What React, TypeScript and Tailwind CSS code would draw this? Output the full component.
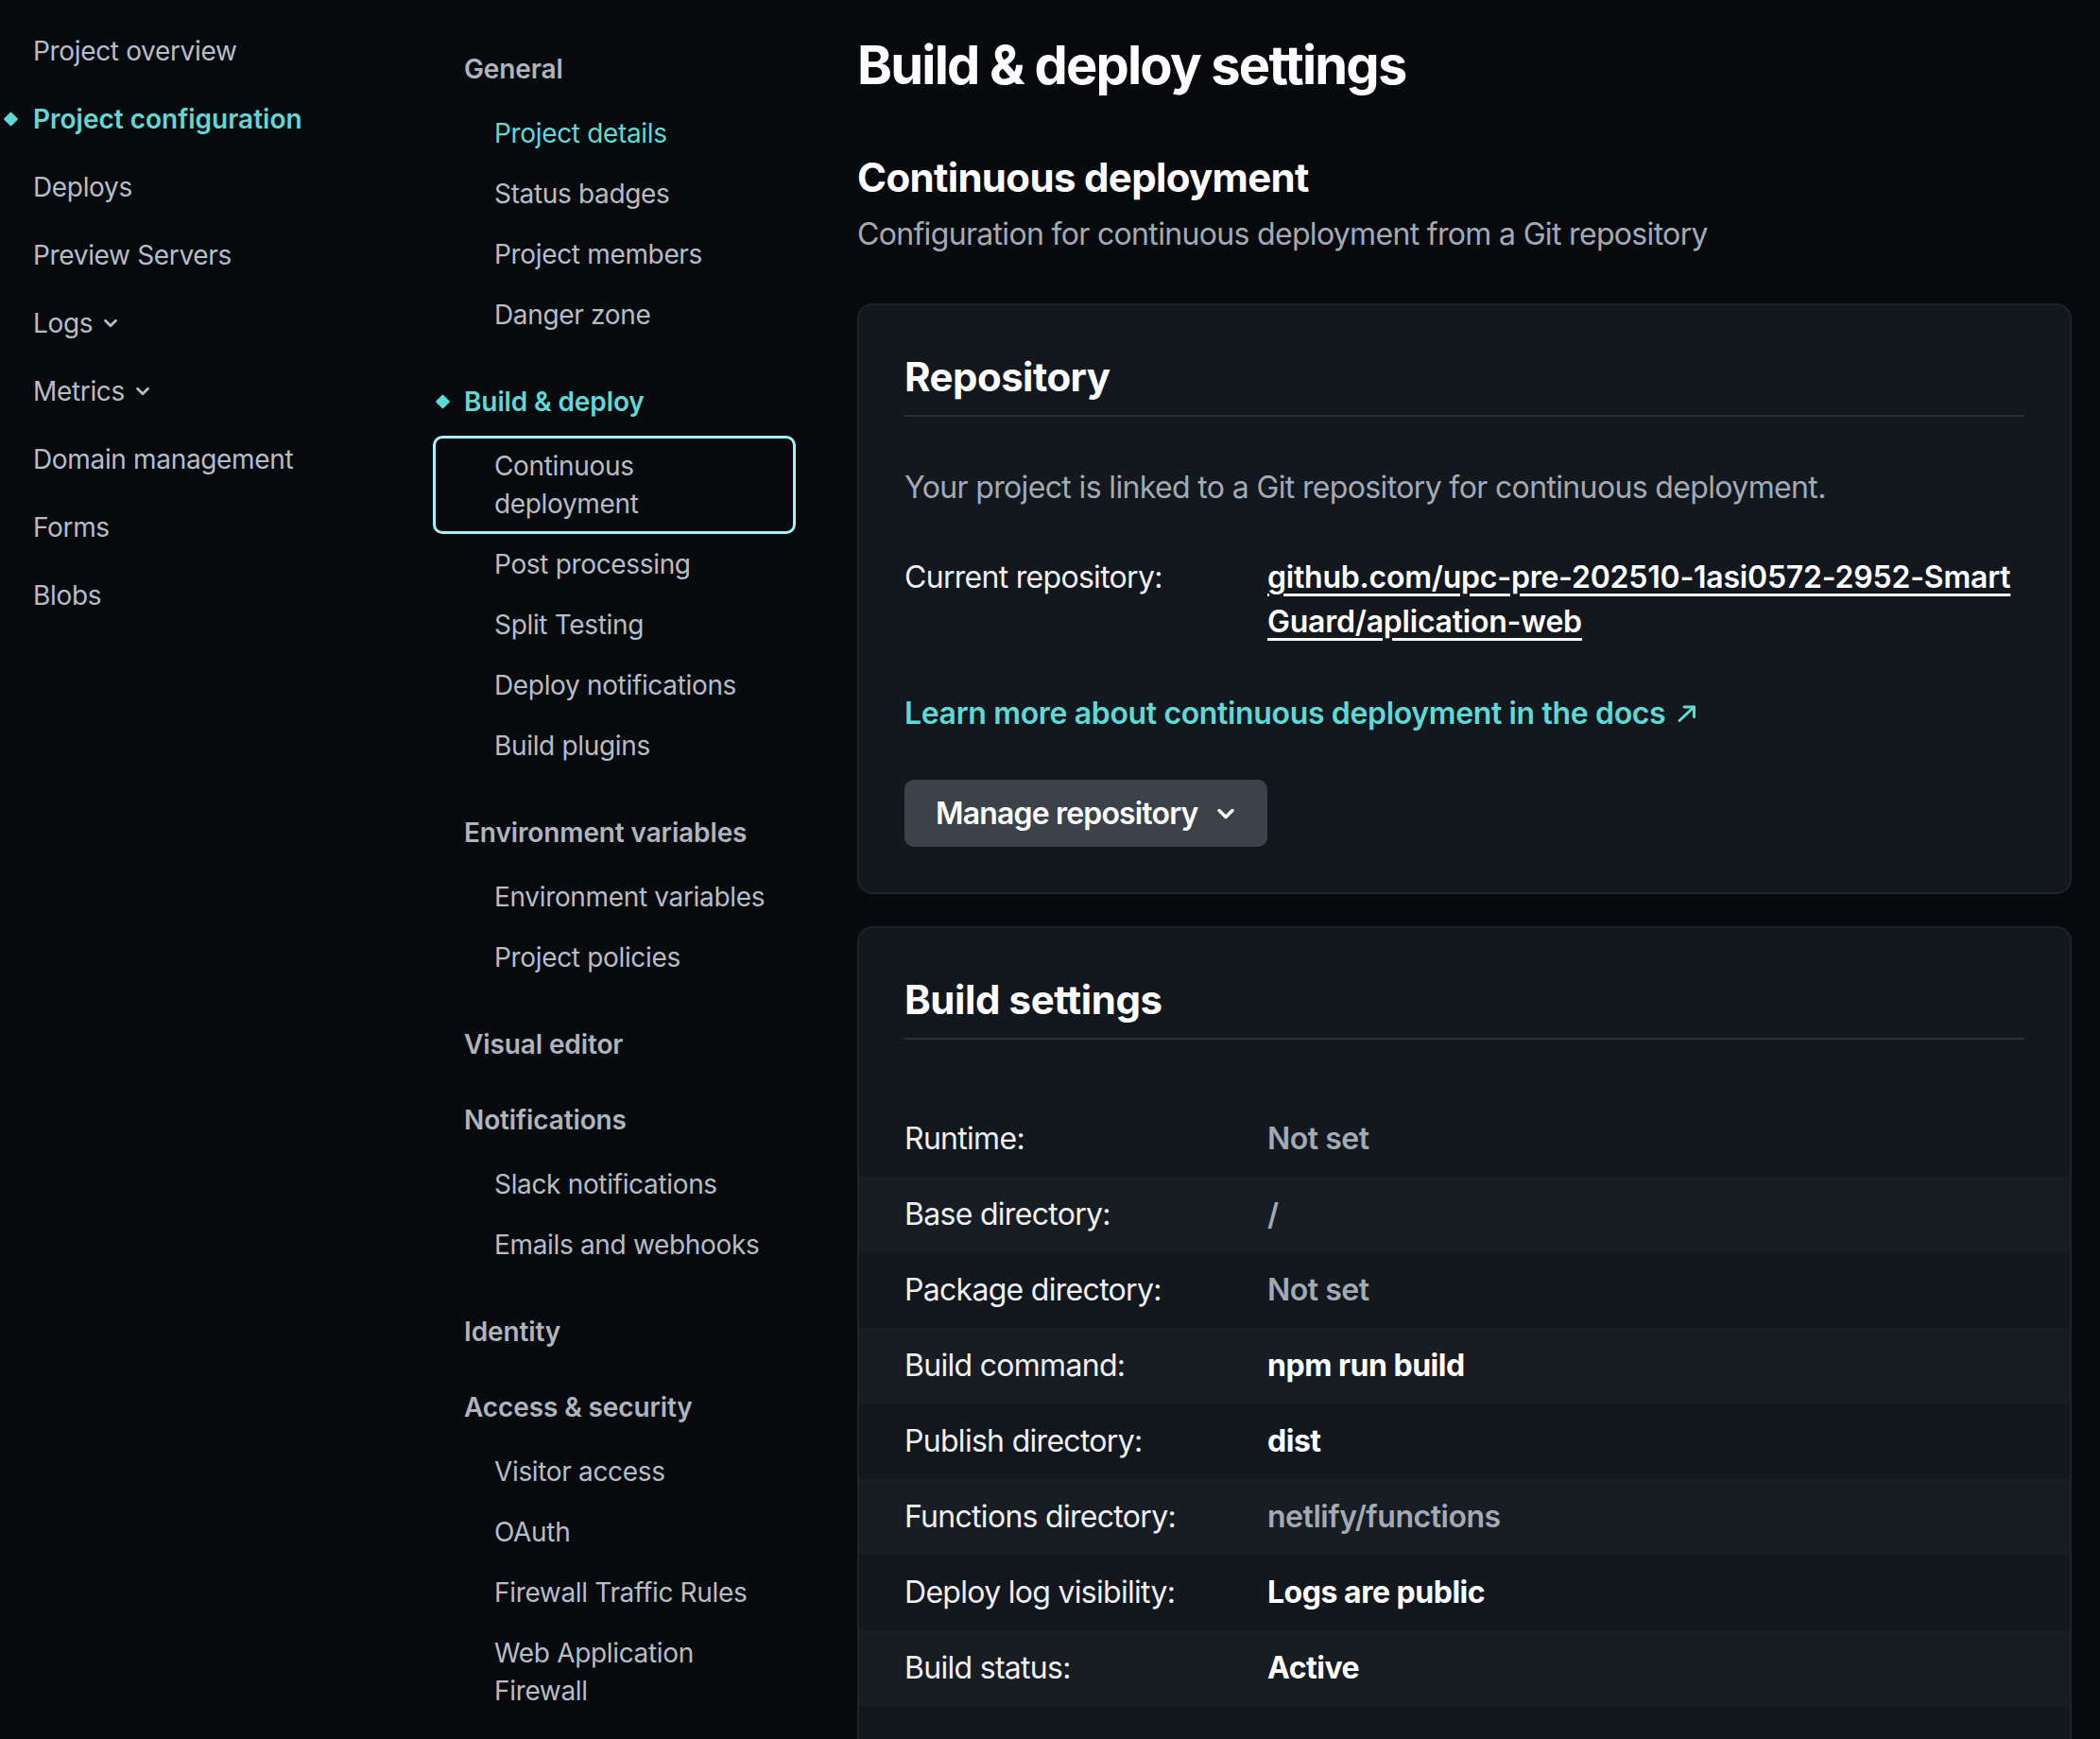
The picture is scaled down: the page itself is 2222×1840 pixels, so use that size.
import { ChevronDown } from 'lucide-react';

type LeftItem = { label: string; active?: boolean; chevron?: boolean };

const leftItems: LeftItem[] = [
  { label: 'Project overview' },
  { label: 'Project configuration', active: true },
  { label: 'Deploys' },
  { label: 'Preview Servers' },
  { label: 'Logs', chevron: true },
  { label: 'Metrics', chevron: true },
  { label: 'Domain management' },
  { label: 'Forms' },
  { label: 'Blobs' },
];

type SubItem = { lines: string[]; active?: boolean; focused?: boolean };
type Group = { title: string; active?: boolean; items: SubItem[] };

const groups: Group[] = [
  {
    title: 'General',
    items: [
      { lines: ['Project details'], active: true },
      { lines: ['Status badges'] },
      { lines: ['Project members'] },
      { lines: ['Danger zone'] },
    ],
  },
  {
    title: 'Build & deploy',
    active: true,
    items: [
      { lines: ['Continuous', 'deployment'], focused: true },
      { lines: ['Post processing'] },
      { lines: ['Split Testing'] },
      { lines: ['Deploy notifications'] },
      { lines: ['Build plugins'] },
    ],
  },
  {
    title: 'Environment variables',
    items: [{ lines: ['Environment variables'] }, { lines: ['Project policies'] }],
  },
  { title: 'Visual editor', items: [] },
  {
    title: 'Notifications',
    items: [{ lines: ['Slack notifications'] }, { lines: ['Emails and webhooks'] }],
  },
  { title: 'Identity', items: [] },
  {
    title: 'Access & security',
    items: [
      { lines: ['Visitor access'] },
      { lines: ['OAuth'] },
      { lines: ['Firewall Traffic Rules'] },
      { lines: ['Web Application', 'Firewall'] },
    ],
  },
];

const rows: { label: string; value: string; strong?: boolean }[] = [
  { label: 'Runtime:', value: 'Not set' },
  { label: 'Base directory:', value: '/' },
  { label: 'Package directory:', value: 'Not set' },
  { label: 'Build command:', value: 'npm run build', strong: true },
  { label: 'Publish directory:', value: 'dist', strong: true },
  { label: 'Functions directory:', value: 'netlify/functions' },
  { label: 'Deploy log visibility:', value: 'Logs are public', strong: true },
  { label: 'Build status:', value: 'Active', strong: true },
];

function Diamond({ className }: { className: string }) {
  return (
    <span
      className={`absolute top-1/2 -translate-y-1/2 rotate-45 w-[11px] h-[11px] rounded-[1px] bg-[#5fd9d5] ${className}`}
    />
  );
}

function LeftNav() {
  return (
    <nav className="w-[458px] shrink-0 pt-[18px]">
      {leftItems.map((it) => (
        <div
          key={it.label}
          className={`relative flex items-center h-[72px] pl-[35px] text-[28px] leading-[40px] ${
            it.active ? 'text-[#5fd9d5] font-semibold' : 'text-[#b7bdc7] tracking-[-0.012em]'
          }`}
        >
          {it.active && <Diamond className="left-[6px]" />}
          <span>{it.label}</span>
          {it.chevron && <ChevronDown size={22} strokeWidth={3} className="ml-[8px] text-[#b7bdc7]" />}
        </div>
      ))}
    </nav>
  );
}

function SubNav() {
  return (
    <nav className="w-[384px] shrink-0 pt-[53px] pb-[40px]">
      {groups.map((g) => (
        <div key={g.title} className="mb-[40px]">
          <div
            className={`relative h-[40px] pl-[33px] text-[28px] leading-[40px] font-semibold tracking-[-0.004em] ${
              g.active ? 'text-[#5fd9d5]' : 'text-[#aeb5bf]'
            }`}
          >
            {g.active && <Diamond className="left-[5px]" />}
            {g.title}
          </div>
          {g.items.length > 0 && (
            <ul className="mt-[16px]">
              {g.items.map((s) => (
                <li
                  key={s.lines.join(' ')}
                  className={`text-[28px] leading-[40px] tracking-[-0.012em] ${
                    s.focused
                      ? 'border-[3px] border-[#a3f3f5] rounded-[10px] pl-[62px] py-[9px]'
                      : 'pl-[65px] py-[12px]'
                  } ${s.active ? 'text-[#5fd9d5]' : 'text-[#b7bdc7]'}`}
                >
                  {s.lines.map((l) => (
                    <div key={l} className="whitespace-nowrap">
                      {l}
                    </div>
                  ))}
                </li>
              ))}
            </ul>
          )}
        </div>
      ))}
    </nav>
  );
}

function ArrowUpRightSmall() {
  return (
    <svg width="20" height="18" viewBox="0 0 20 18" fill="none" className="ml-[13px] shrink-0">
      <path d="M2 16.5 17.5 2" stroke="#5fd9d5" strokeWidth="3" strokeLinecap="round" />
      <path d="M7 2h10.5v10.5" stroke="#5fd9d5" strokeWidth="3" strokeLinecap="round" strokeLinejoin="round" />
    </svg>
  );
}

function Main() {
  return (
    <main className="flex-1 ml-[65px] pr-[30px] pt-[37px]">
      <h1 className="text-[56px] leading-[64px] font-bold tracking-[-0.032em] text-white">Build &amp; deploy settings</h1>

      <h2 className="mt-[61px] text-[42px] leading-[52px] font-bold tracking-[-0.016em] text-white">
        Continuous deployment
      </h2>
      <p className="mt-[10px] text-[32px] leading-[48px] tracking-[-0.021em] text-[#a3aab5]">
        Configuration for continuous deployment from a Git repository
      </p>

      <section className="mt-[49px] rounded-[16px] border-2 border-[#1e2329] bg-[#13171e] px-[48px] pt-[50px] pb-[48px]">
        <h3 className="text-[42px] leading-[52px] font-bold tracking-[-0.013em] text-white pb-[14px] border-b-2 border-[#2a2f37]">
          Repository
        </h3>
        <p className="mt-[51px] text-[32px] leading-[48px] tracking-[-0.02em] text-[#a3aab5]">
          Your project is linked to a Git repository for continuous deployment.
        </p>
        <div className="mt-[47px] flex text-[32px] leading-[47px]">
          <div className="w-[384px] shrink-0 tracking-[-0.022em] text-[#eef0f3]">Current repository:</div>
          <a className="font-semibold tracking-[-0.007em] text-white underline decoration-[3px] underline-offset-[6px]">
            github.com/upc-pre-202510-1asi0572-2952-Smart
            <br />
            Guard/aplication-web
          </a>
        </div>
        <div className="mt-[50px] flex items-center text-[32px] leading-[48px] font-semibold tracking-[-0.011em] text-[#5fd9d5]">
          <span>Learn more about continuous deployment in the docs</span>
          <ArrowUpRightSmall />
        </div>
        <button className="mt-[46px] flex items-center h-[71px] pl-[33px] pr-[30px] rounded-[10px] bg-[#3c424a] text-[32px] leading-[48px] font-semibold tracking-[-0.026em] text-white">
          <span>Manage repository</span>
          <ChevronDown size={28} strokeWidth={3} className="ml-[15px]" />
        </button>
      </section>

      <section className="mt-[34px] rounded-t-[16px] border-2 border-b-0 border-[#1e2329] bg-[#13171e] pt-[50px] pb-[48px]">
        <div className="px-[48px]">
          <h3 className="text-[42px] leading-[52px] font-bold tracking-[-0.01em] text-white pb-[14px] border-b-2 border-[#2a2f37]">
            Build settings
          </h3>
        </div>
        <div className="mt-[65px]">
          {rows.map((r, i) => (
            <div
              key={r.label}
              className={`flex items-center h-[80px] px-[48px] text-[32px] leading-[48px] ${
                i % 2 === 1 ? 'bg-[#181c23]' : ''
              }`}
            >
              <div className="w-[384px] shrink-0 tracking-[-0.022em] text-[#eef0f3]">{r.label}</div>
              <div
                className={
                  r.strong
                    ? 'font-bold tracking-[-0.015em] text-white'
                    : 'font-semibold tracking-[-0.015em] text-[#a3aab5]'
                }
              >
                {r.value}
              </div>
            </div>
          ))}
        </div>
      </section>
    </main>
  );
}

export default function App() {
  return (
    <div className="min-h-screen bg-[#080a0e] font-['Inter',sans-serif] flex">
      <LeftNav />
      <SubNav />
      <Main />
    </div>
  );
}
